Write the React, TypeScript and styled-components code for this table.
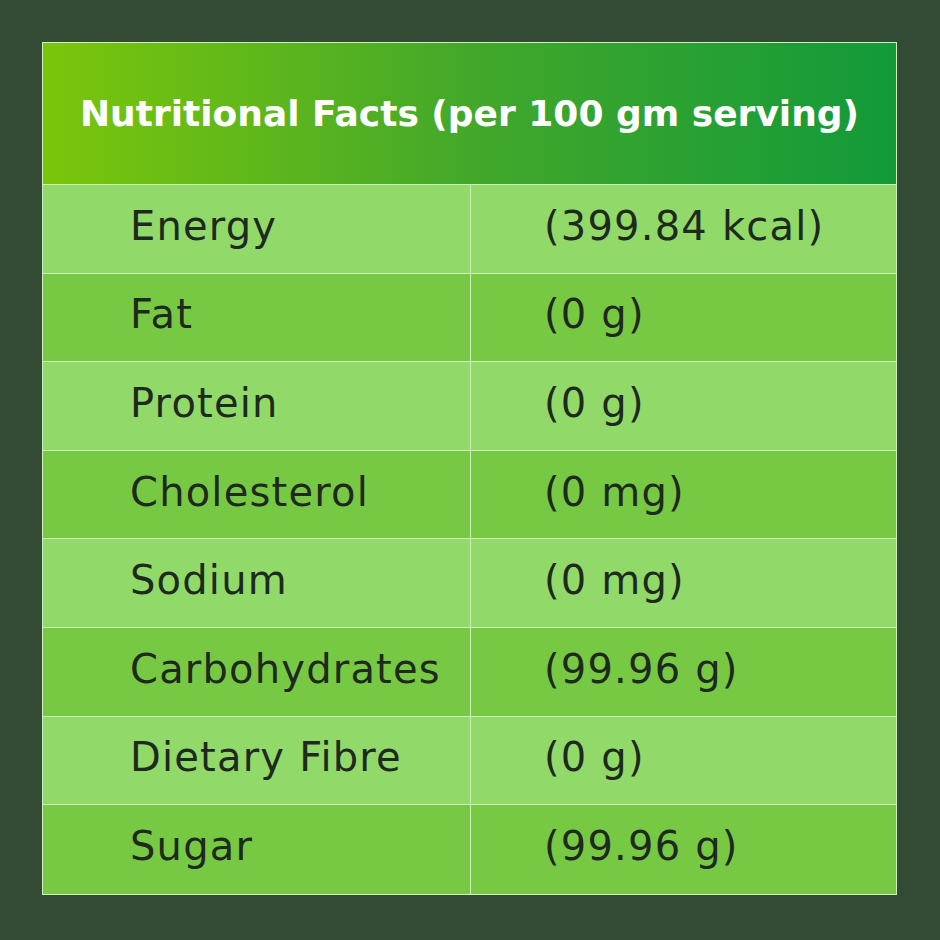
import React from "react";
import styled, { createGlobalStyle } from "styled-components";

const Global = createGlobalStyle`
  html, body { margin: 0; padding: 0; background: #334b35; }
  body { font-family: "DejaVu Sans", "Liberation Sans", sans-serif; }
`;

const Page = styled.div`
  width: 940px;
  height: 940px;
  box-sizing: border-box;
  padding: 42px 42px 0 42px;
  background: #334b35;
`;

const Table = styled.div`
  width: 855px;
  display: grid;
  grid-template-columns: 428px 1fr;
  grid-template-rows: 142px repeat(8, 88.6px);
  border: 1px solid #cdf1b8;
  box-sizing: border-box;
`;

const Header = styled.div`
  grid-column: 1 / span 2;
  display: flex;
  align-items: center;
  justify-content: center;
  background: linear-gradient(90deg, #7bc60b 0%, #43a82a 50%, #129a3a 100%);
  color: #ffffff;
  font-size: 36px;
  font-weight: 700;
  border-bottom: 1px solid #cdf1b8;
`;

const Cell = styled.div<{ $alt: boolean; $right?: boolean; $last?: boolean }>`
  display: flex;
  align-items: center;
  background: ${(p) => (p.$alt ? "#77c944" : "#91da6a")};
  color: #1e2a1d;
  font-size: 40px;
  letter-spacing: 1.2px;
  padding-left: ${(p) => (p.$right ? "73px" : "87px")};
  padding-bottom: 6px;
  border-right: ${(p) => (p.$right ? "none" : "1px solid #cdf1b8")};
  border-bottom: ${(p) => (p.$last ? "none" : "1px solid #cdf1b8")};
  box-sizing: border-box;
`;

const rows: [string, string][] = [
  ["Energy", "(399.84 kcal)"],
  ["Fat", "(0 g)"],
  ["Protein", "(0 g)"],
  ["Cholesterol", "(0 mg)"],
  ["Sodium", "(0 mg)"],
  ["Carbohydrates", "(99.96 g)"],
  ["Dietary Fibre", "(0 g)"],
  ["Sugar", "(99.96 g)"],
];

export default function App() {
  return (
    <>
      <Global />
      <Page>
        <Table>
          <Header>Nutritional Facts (per 100 gm serving)</Header>
          {rows.map(([k, v], i) => (
            <React.Fragment key={k}>
              <Cell $alt={i % 2 === 1} $last={i === rows.length - 1}>{k}</Cell>
              <Cell $alt={i % 2 === 1} $right $last={i === rows.length - 1}>{v}</Cell>
            </React.Fragment>
          ))}
        </Table>
      </Page>
    </>
  );
}
